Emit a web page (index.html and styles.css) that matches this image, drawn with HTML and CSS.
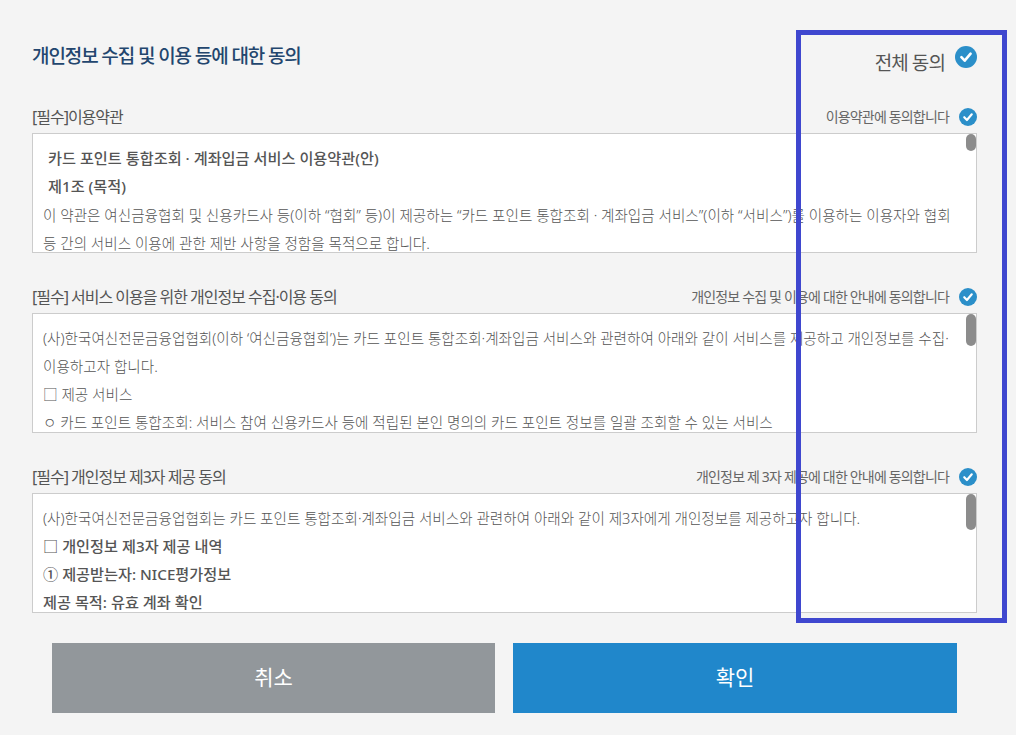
FILE: index.html
```html
<!DOCTYPE html>
<html lang="ko">
<head>
<meta charset="utf-8">
<title>개인정보 수집 및 이용 등에 대한 동의</title>
<link rel="stylesheet" href="styles.css">
</head>
<body>
<svg class="defs" width="0" height="0" aria-hidden="true"><symbol id="chk" viewBox="0 0 22 22"><circle cx="11" cy="11" r="11" fill="#2b8fc9"/><path d="M6.4 11.2l3.3 3.5 5.9-7" fill="none" stroke="#fff" stroke-width="2.6" stroke-linecap="round" stroke-linejoin="round"/></symbol></svg>
<main class="page">
  <header class="top">
    <h1 class="title">개인정보 수집 및 이용 등에 대한 동의</h1>
    <div class="all"><span class="all-text">전체 동의</span><svg class="all-icon"><use href="#chk"/></svg></div>
  </header>

  <section class="sec">
    <div class="head">
      <h2 class="label">[필수]이용약관</h2>
      <div class="agree"><span class="agree-text">이용약관에 동의합니다</span><svg class="icon"><use href="#chk"/></svg></div>
    </div>
    <div class="box">
      <span class="thumb thumb-a"></span>
      <p class="line strong ind">카드 포인트 통합조회 · 계좌입금 서비스 이용약관(안)</p>
      <p class="line strong ind">제1조 (목적)</p>
      <p class="line">이 약관은 여신금융협회 및 신용카드사 등(이하 “협회” 등)이 제공하는 “카드 포인트 통합조회 · 계좌입금 서비스”(이하 “서비스”)를 이용하는 이용자와 협회</p>
      <p class="line">등 간의 서비스 이용에 관한 제반 사항을 정함을 목적으로 합니다.</p>
    </div>
  </section>

  <section class="sec">
    <div class="head">
      <h2 class="label">[필수] 서비스 이용을 위한 개인정보 수집·이용 동의</h2>
      <div class="agree"><span class="agree-text">개인정보 수집 및 이용에 대한 안내에 동의합니다</span><svg class="icon"><use href="#chk"/></svg></div>
    </div>
    <div class="box">
      <span class="thumb thumb-b"></span>
      <p class="line">(사)한국여신전문금융업협회(이하 ‘여신금융협회’)는 카드 포인트 통합조회·계좌입금 서비스와 관련하여 아래와 같이 서비스를 제공하고 개인정보를 수집·</p>
      <p class="line">이용하고자 합니다.</p>
      <p class="line">□ 제공 서비스</p>
      <p class="line">ㅇ 카드 포인트 통합조회: 서비스 참여 신용카드사 등에 적립된 본인 명의의 카드 포인트 정보를 일괄 조회할 수 있는 서비스</p>
    </div>
  </section>

  <section class="sec">
    <div class="head">
      <h2 class="label">[필수] 개인정보 제3자 제공 동의</h2>
      <div class="agree"><span class="agree-text">개인정보 제 3자 제공에 대한 안내에 동의합니다</span><svg class="icon"><use href="#chk"/></svg></div>
    </div>
    <div class="box">
      <span class="thumb thumb-c"></span>
      <p class="line">(사)한국여신전문금융업협회는 카드 포인트 통합조회·계좌입금 서비스와 관련하여 아래와 같이 제3자에게 개인정보를 제공하고자 합니다.</p>
      <p class="line strong">□ 개인정보 제3자 제공 내역</p>
      <p class="line strong">① 제공받는자: NICE평가정보</p>
      <p class="line strong">제공 목적: 유효 계좌 확인</p>
    </div>
  </section>

  <div class="actions">
    <button class="btn btn-cancel" type="button">취소</button>
    <button class="btn btn-ok" type="button">확인</button>
  </div>
</main>
<div class="highlight"></div>
</body>
</html>
```
FILE: styles.css
```css
* { box-sizing: border-box; }
html, body { margin: 0; height: 100%; }
body {
  background: #f4f4f4;
  font-family: "Noto Sans", "Noto Sans CJK KR", sans-serif;
  color: #555;
  overflow: hidden;
}
.defs { position: absolute; }
.page { width: 1016px; padding: 41px 39px 0 32px; }
.top { display: flex; justify-content: space-between; height: 32px; }
.title { margin: 0; font-size: 19px; line-height: 31px; font-weight: 500; letter-spacing: -1.1px; color: #23466e; }
.all { display: flex; align-items: flex-start; }
.all-text { font-size: 19px; line-height: 26px; margin-top: 9px; letter-spacing: -0.9px; color: #555; margin-right: 10px; font-weight: 400; }
.all-icon { width: 22px; height: 22px; margin-top: 5px; }
.sec { height: 180px; }
.head { display: flex; justify-content: space-between; align-items: center; height: 60px; padding-top: 33px; padding-bottom: 6px; }
.label { margin: 0; font-size: 16px; line-height: 22px; font-weight: 400; letter-spacing: -1.02px; color: #555; }
.agree { display: flex; align-items: center; }
.agree-text { font-size: 14px; letter-spacing: -0.83px; color: #666; margin-right: 10px; line-height: 20px; }
.icon { width: 18px; height: 18px; }
.box {
  position: relative;
  height: 120px;
  background: #fff;
  border: 1px solid #ccc;
  padding: 10px 10px 0;
  overflow: hidden;
}
.line { margin: 0; font-size: 14.6px; font-weight: 300; line-height: 28px; color: #555; white-space: nowrap; }
.strong { font-weight: 500; color: #555; font-size: 15.2px; }
.strong + .line:not(.strong) { margin-top: 1px; }
.ind { padding-left: 5px; }
.thumb { position: absolute; top: 0; right: 0; width: 10px; background: #8c8c8c; border-radius: 5px; }
.thumb-a { height: 17px; }
.thumb-b { height: 32px; }
.thumb-c { height: 36px; }
.actions { display: flex; gap: 18px; padding-left: 20px; margin-top: 30px; margin-right: -19px; }
.btn {
  width: 443px;
  height: 70px;
  border: 0;
  padding: 0 0 4px;
  color: #fff;
  font: 400 21px/1 "Noto Sans CJK KR", sans-serif;
}
.btn-ok { width: 444px; background: #2087cb; }
.btn-cancel { background: #92979b; }
.highlight { position: absolute; left: 796px; top: 30px; width: 211px; height: 593px; border: 5px solid #3f47cf; pointer-events: none; }
```
